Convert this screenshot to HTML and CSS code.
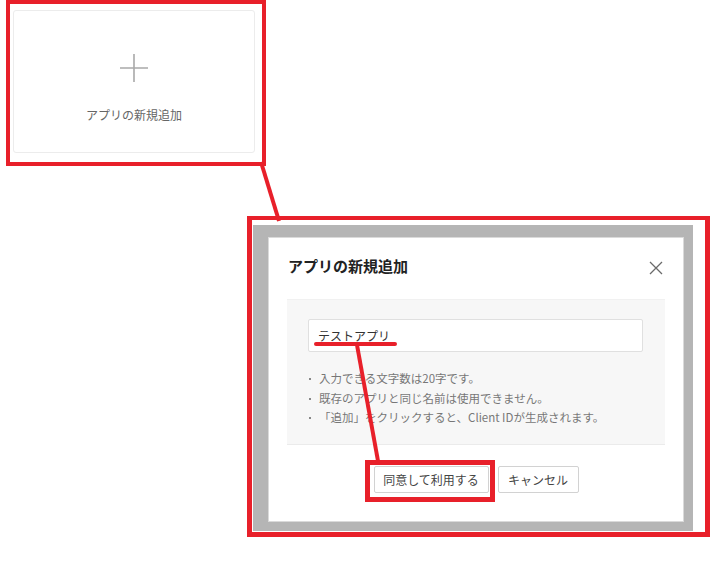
FILE: index.html
```html
<!DOCTYPE html>
<html lang="ja">
<head>
<meta charset="utf-8">
<title>アプリの新規追加</title>
<link rel="stylesheet" href="styles.css">
</head>
<body>
<div class="page">
  <div class="shot1">
    <div class="card">
      <svg class="plus" width="30" height="30" viewBox="0 0 30 30" aria-hidden="true">
        <path d="M15 1V29M1 15H29" stroke="#a9a9a9" stroke-width="1.6" fill="none"/>
      </svg>
      <div class="card-label">アプリの新規追加</div>
    </div>
  </div>

  <div class="shot2">
    <div class="overlay">
      <div class="dialog">
        <div class="dialog-head">
          <div class="dialog-title">アプリの新規追加</div>
          <svg class="close" width="14" height="14" viewBox="0 0 14 14" aria-hidden="true">
            <path d="M1 1L13 13M13 1L1 13" stroke="#6a6a6a" stroke-width="1.3" fill="none"/>
          </svg>
        </div>
        <div class="panel">
          <div class="field">テストアプリ</div>
          <ul class="notes">
            <li>入力できる文字数は20字です。</li>
            <li>既存のアプリと同じ名前は使用できません。</li>
            <li>「追加」をクリックすると、Client IDが生成されます。</li>
          </ul>
        </div>
        <div class="actions">
          <div class="btn btn-agree">同意して利用する</div>
          <div class="btn btn-cancel">キャンセル</div>
        </div>
      </div>
    </div>
  </div>

  <svg class="marks" width="720" height="564" viewBox="0 0 720 564" aria-hidden="true">
    <line x1="261" y1="162" x2="279" y2="221" stroke="#e8202a" stroke-width="4"/>
    <line x1="316" y1="344" x2="395" y2="344" stroke="#e8202a" stroke-width="4" stroke-linecap="round"/>
    <line x1="357" y1="345" x2="378" y2="461" stroke="#e8202a" stroke-width="4"/>
    <rect x="367.5" y="462.5" width="125" height="37" fill="none" stroke="#e8202a" stroke-width="5"/>
  </svg>
</div>
</body>
</html>
```

FILE: styles.css
```css
* { box-sizing: border-box; }

html, body {
  margin: 0;
  padding: 0;
  background: #ffffff;
}

.page {
  position: relative;
  width: 720px;
  height: 564px;
  overflow: hidden;
  font-family: "Noto Sans CJK JP", "Noto Sans", sans-serif;
  color: #333;
}

/* top annotation box with the add card */
.shot1 {
  margin-left: 6px;
  width: 260px;
  height: 166px;
  border: 4px solid #e8202a;
  padding: 6px 0 0 3px;
}

.card {
  width: 242px;
  height: 143px;
  border: 1px solid #ececec;
  border-radius: 3px;
  background: #fff;
  display: flex;
  flex-direction: column;
  align-items: center;
  padding-top: 42px;
}

.plus { display: block; }

.card-label {
  margin-top: 24px;
  font-size: 12px;
  line-height: 16px;
  color: #666;
}

/* bottom annotation box with the dialog */
.shot2 {
  margin-top: 50px;
  margin-left: 247px;
  width: 463px;
  height: 321px;
  border-style: solid;
  border-color: #e8202a;
  border-width: 4px 5px 5px 5px;
  padding: 5px 12px 1px 1px;
}

.overlay {
  width: 440px;
  height: 306px;
  background: #b5b5b5;
  padding: 12px 9px 9px 15px;
}

.dialog {
  width: 416px;
  height: 285px;
  background: #fff;
  border: 1px solid #dadada;
  display: flex;
  flex-direction: column;
}

.dialog-head {
  height: 61px;
  display: flex;
  justify-content: space-between;
  align-items: flex-start;
  padding: 18px 20px 0 19px;
}

.dialog-title {
  font-size: 15px;
  line-height: 20px;
  font-weight: 700;
  color: #222;
}

.close {
  display: block;
  margin-top: 5px;
}

.panel {
  margin: 0 18px;
  height: 146px;
  background: #f7f7f7;
  border-top: 1px solid #f1f1f1;
  border-bottom: 1px solid #ebebeb;
  padding: 19px 22px 0 21px;
}

.field {
  height: 33px;
  background: #fff;
  border: 1px solid #e0e0e0;
  border-radius: 2px;
  padding-left: 9px;
  font-size: 12px;
  line-height: 31px;
  color: #333;
}

.notes {
  list-style: none;
  margin: 17px 0 0 0;
  padding: 0;
  font-size: 11.5px;
  line-height: 19.5px;
  color: #777;
}

.notes li {
  position: relative;
  padding-left: 11px;
}

.notes li::before {
  content: "";
  position: absolute;
  left: 1px;
  top: 9px;
  width: 2px;
  height: 2px;
  background: #888;
}

.actions {
  display: flex;
  justify-content: center;
  gap: 9px;
  margin-top: 21px;
}

.btn {
  height: 27px;
  border: 1px solid #d2d2d2;
  border-radius: 2px;
  background: #fff;
  font-size: 12px;
  line-height: 25px;
  color: #444;
  text-align: center;
}

.btn-agree { width: 115px; }
.btn-cancel { width: 81px; }

.marks {
  position: absolute;
  left: 0;
  top: 0;
  pointer-events: none;
}
```
